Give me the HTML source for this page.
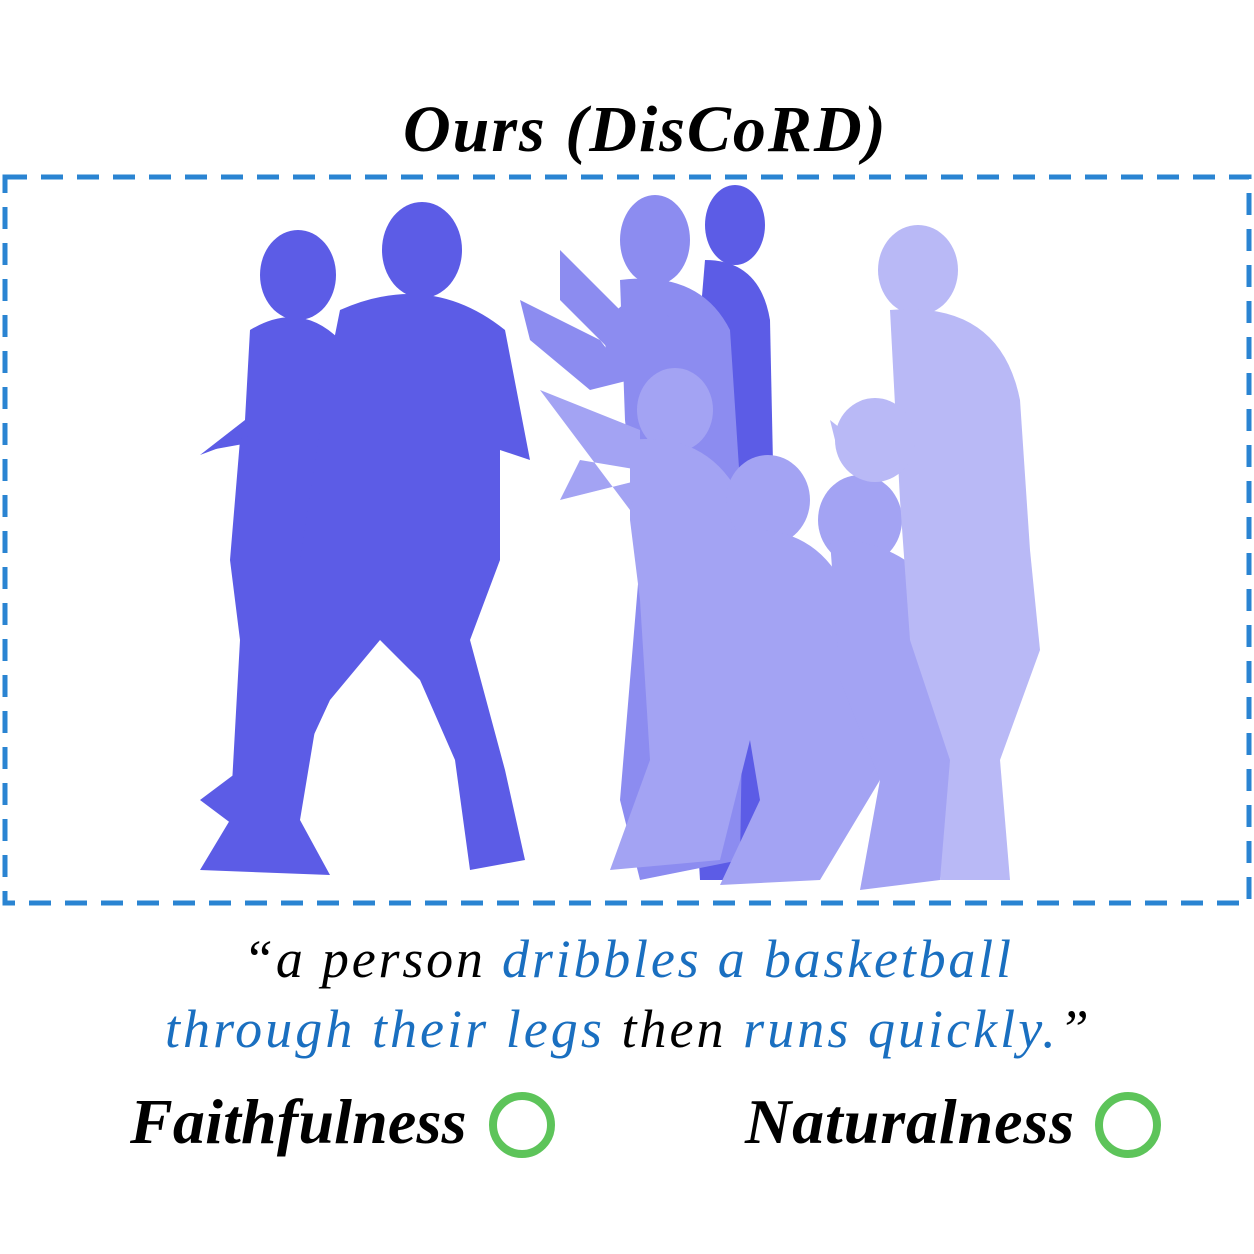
<!DOCTYPE html>
<html><head><meta charset="utf-8"><style>
html,body{margin:0;padding:0;background:#fff;width:1254px;height:1254px;overflow:hidden}
.t{position:absolute;font-family:"Liberation Serif",serif;font-style:italic;white-space:nowrap}
</style></head><body>
<svg width="1254" height="1254" style="position:absolute;left:0;top:0">
<rect x="5" y="177" width="1244" height="726" fill="none" stroke="#2a84d2" stroke-width="5" stroke-dasharray="22 14"/>
<g fill="#5c5ce6">
<ellipse cx="298" cy="275" rx="38" ry="45"/>
<path d="M250 330 Q300 300 340 340 L360 560 L330 640 L300 820 L330 875 L200 870 L230 820 L240 640 L230 560 L240 440 L200 455 L245 420 Z"/>
<ellipse cx="422" cy="250" rx="40" ry="48"/>
<path d="M340 310 Q430 270 505 330 L530 460 L500 450 L500 560 L470 640 L505 770 L525 860 L470 870 L455 760 L420 680 L380 640 L330 700 L270 830 L240 830 L200 800 L240 770 L280 650 L300 560 L320 430 L210 450 L320 410 Z"/>
<ellipse cx="735" cy="225" rx="30" ry="40"/>
<path d="M705 260 Q760 260 770 320 L775 560 L760 880 L700 880 L690 700 L700 320 Z"/>
</g>
<g fill="#8c8cf0">
<ellipse cx="655" cy="240" rx="35" ry="45"/>
<path d="M620 280 Q700 270 730 330 L745 560 L740 860 L640 880 L620 800 L640 560 L625 420 Z"/>
<ellipse cx="640" cy="340" rx="35" ry="40"/>
<ellipse cx="690" cy="350" rx="35" ry="40"/>
<path d="M560 250 L600 290 L640 330 L610 350 L560 300 Z"/>
<path d="M520 300 L600 340 L630 380 L590 390 L530 340 Z"/>
</g>
<g fill="#a3a3f3">
<ellipse cx="675" cy="410" rx="38" ry="42"/>
<path d="M630 440 Q720 430 750 520 L760 700 L720 860 L610 870 L650 760 L640 600 L630 520 Z"/>
<path d="M540 390 L640 430 L640 470 L580 460 L560 500 L600 490 L640 480 L630 510 Z"/>
<ellipse cx="768" cy="500" rx="42" ry="45"/>
<path d="M730 530 Q820 520 850 600 L880 780 L820 880 L720 885 L760 800 L740 680 L720 600 Z"/>
<ellipse cx="860" cy="520" rx="42" ry="45"/>
<path d="M830 540 Q920 540 950 620 L960 760 L940 880 L860 890 L880 780 L840 680 Z"/>
</g>
<g fill="#b9b9f6">
<ellipse cx="918" cy="270" rx="40" ry="45"/>
<path d="M890 310 Q1000 300 1020 400 L1030 550 L1040 650 L1000 760 L1010 880 L940 880 L950 760 L910 640 L900 500 Z"/>
<ellipse cx="875" cy="440" rx="40" ry="42"/>
<path d="M830 420 L880 460 L840 460 Z"/>
</g>
<circle cx="522" cy="1125" r="29" fill="none" stroke="#5dc45a" stroke-width="8"/>
<circle cx="1128" cy="1125" r="29" fill="none" stroke="#5dc45a" stroke-width="8"/>
</svg>
<div class="t" style="left:403px;top:92px;font-size:66px;font-weight:bold;color:#000;letter-spacing:2px">Ours (DisCoRD)</div>
<div class="t" style="left:243px;top:928px;font-size:54px;color:#000;letter-spacing:2.8px">“a person <span style="color:#1a6fc0">dribbles a basketball</span></div>
<div class="t" style="left:165px;top:998px;font-size:54px;color:#000;letter-spacing:3.05px"><span style="color:#1a6fc0">through their legs</span> then <span style="color:#1a6fc0">runs quickly.</span>”</div>
<div class="t" style="left:130px;top:1085px;font-size:64px;font-weight:bold;color:#000;letter-spacing:0.2px">Faithfulness</div>
<div class="t" style="left:745px;top:1085px;font-size:64px;font-weight:bold;color:#000;letter-spacing:0.9px">Naturalness</div>
</body></html>
